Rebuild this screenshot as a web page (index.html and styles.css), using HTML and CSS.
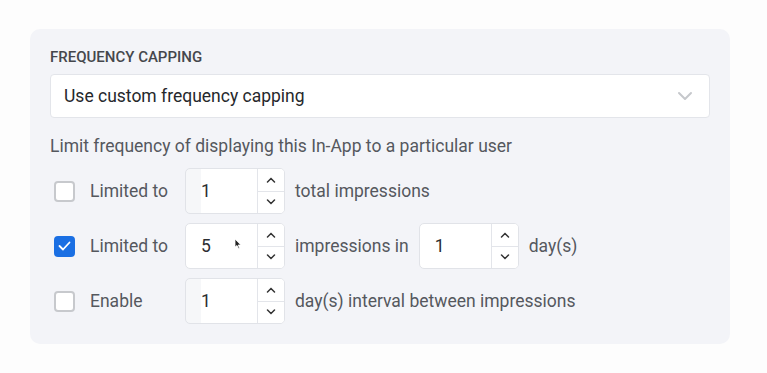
FILE: index.html
```html
<!DOCTYPE html>
<html lang='en'>
  <head>
    <meta charset='UTF-8'/>
    <title>Frequency capping</title>
    <link rel="stylesheet" href="styles.css">
  </head>
  <body>
    <div class='panel'>
      <div class='title'>FREQUENCY CAPPING</div>
      <div class='select'>
        <span>Use custom frequency capping</span>
        <svg class='chevron' width='16' height='10' viewBox='0 0 16 10'>
          <path d='M2 2 L8 8 L14 2' fill='none' stroke='#c6c8cc' stroke-width='2' stroke-linecap='round' stroke-linejoin='round'/>
        </svg>
      </div>
      <div class='hint'>Limit frequency of displaying this In-App to a particular user</div>

      <div class='rows'>
        <div class='row'>
          <div class='lead'>
            <span class='check'></span>
            <span class='text'>Limited to</span>
          </div>
          <div class='number faded'>
            <span class='value'>1</span>
            <div class='spin'>
              <div class='arrow'><svg width='10' height='6' viewBox='0 0 10 6'><path d='M1.5 5 L5 1.5 L8.5 5' fill='none' stroke='#333' stroke-width='1.5' stroke-linecap='round'/></svg></div>
              <div class='arrow'><svg width='10' height='6' viewBox='0 0 10 6'><path d='M1.5 1 L5 4.5 L8.5 1' fill='none' stroke='#333' stroke-width='1.5' stroke-linecap='round'/></svg></div>
            </div>
          </div>
          <span class='text'>total impressions</span>
        </div>

        <div class='row'>
          <div class='lead'>
            <span class='check checked'>
              <svg width='13' height='10' viewBox='0 0 13 10'><path d='M1.5 5 L5 8.5 L11.5 1.5' fill='none' stroke='#fff' stroke-width='1.8' stroke-linecap='round' stroke-linejoin='round'/></svg>
            </span>
            <span class='text'>Limited to</span>
          </div>
          <div class='number'>
            <span class='value'>5</span>
            <svg class='cursor' width='8' height='12' viewBox='0 0 8 12'><path d='M1 1 L1 9 L3 7.5 L4.5 10.5 L5.5 10 L4.2 7 L6.8 7 Z' fill='#222' stroke='#fff' stroke-width='0.8'/></svg>
            <div class='spin'>
              <div class='arrow'><svg width='10' height='6' viewBox='0 0 10 6'><path d='M1.5 5 L5 1.5 L8.5 5' fill='none' stroke='#333' stroke-width='1.5' stroke-linecap='round'/></svg></div>
              <div class='arrow'><svg width='10' height='6' viewBox='0 0 10 6'><path d='M1.5 1 L5 4.5 L8.5 1' fill='none' stroke='#333' stroke-width='1.5' stroke-linecap='round'/></svg></div>
            </div>
          </div>
          <span class='text'>impressions in</span>
          <div class='number'>
            <span class='value'>1</span>
            <div class='spin'>
              <div class='arrow'><svg width='10' height='6' viewBox='0 0 10 6'><path d='M1.5 5 L5 1.5 L8.5 5' fill='none' stroke='#333' stroke-width='1.5' stroke-linecap='round'/></svg></div>
              <div class='arrow'><svg width='10' height='6' viewBox='0 0 10 6'><path d='M1.5 1 L5 4.5 L8.5 1' fill='none' stroke='#333' stroke-width='1.5' stroke-linecap='round'/></svg></div>
            </div>
          </div>
          <span class='text'>day(s)</span>
        </div>

        <div class='row'>
          <div class='lead'>
            <span class='check'></span>
            <span class='text'>Enable</span>
          </div>
          <div class='number faded'>
            <span class='value'>1</span>
            <div class='spin'>
              <div class='arrow'><svg width='10' height='6' viewBox='0 0 10 6'><path d='M1.5 5 L5 1.5 L8.5 5' fill='none' stroke='#333' stroke-width='1.5' stroke-linecap='round'/></svg></div>
              <div class='arrow'><svg width='10' height='6' viewBox='0 0 10 6'><path d='M1.5 1 L5 4.5 L8.5 1' fill='none' stroke='#333' stroke-width='1.5' stroke-linecap='round'/></svg></div>
            </div>
          </div>
          <span class='text'>day(s) interval between impressions</span>
        </div>
      </div>
    </div>
  </body>
</html>
```

FILE: styles.css
```css
body {
  margin: 0;
  background-color: #fdfdfd;
  font-family: Roboto, "Liberation Sans", sans-serif;
}

.panel {
  width: 660px;
  margin: 29px 0 0 30px;
  padding: 20px;
  background-color: #f3f4f8;
  border-radius: 10px;
}

.title {
  font-size: 15px;
  line-height: 17px;
  font-weight: 500;
  color: #45474c;
}

.select {
  margin-top: 8px;
  height: 42px;
  padding: 0 16px 0 13px;
  display: flex;
  align-items: center;
  justify-content: space-between;
  background-color: #fff;
  border: 1px solid #e3e5ea;
  border-radius: 4px;
  font-size: 17.5px;
  color: #26282c;
}

.hint {
  margin-top: 18px;
  font-size: 17.5px;
  line-height: 20px;
  color: #55585e;
}

.rows {
  margin-top: 12px;
  display: flex;
  flex-direction: column;
  gap: 9px;
}

.row {
  display: flex;
  align-items: center;
  height: 46px;
}

.lead {
  width: 135px;
  display: flex;
  align-items: center;
}

.check {
  width: 17px;
  height: 17px;
  margin-left: 4px;
  margin-right: 15px;
  border: 2px solid #c7c9cd;
  border-radius: 4px;
  background-color: #fff;
  display: flex;
  align-items: center;
  justify-content: center;
}

.check.checked {
  background-color: #1a6fe3;
  border-color: #1a6fe3;
}

.text {
  font-size: 17.5px;
  color: #55585e;
}

.number {
  position: relative;
  width: 98px;
  height: 44px;
  margin-right: 10px;
  display: flex;
  background-color: #fff;
  border: 1px solid #e1e3e8;
  border-radius: 5px;
  overflow: hidden;
}

.number.faded {
  background: linear-gradient(to right, #f6f7f9 15px, #fff 15px);
}

.text + .number {
  margin-left: 10px;
}

.value {
  flex: 1;
  padding-left: 15px;
  display: flex;
  align-items: center;
  font-size: 17.5px;
  color: #2b2d31;
}

.spin {
  width: 26px;
  display: flex;
  flex-direction: column;
  border-left: 1px solid #e3e5ea;
  background-color: #fff;
}

.arrow {
  flex: 1;
  display: flex;
  align-items: center;
  justify-content: center;
}

.arrow + .arrow {
  border-top: 1px solid #e3e5ea;
}

.cursor {
  position: absolute;
  left: 48px;
  top: 14px;
}
```
